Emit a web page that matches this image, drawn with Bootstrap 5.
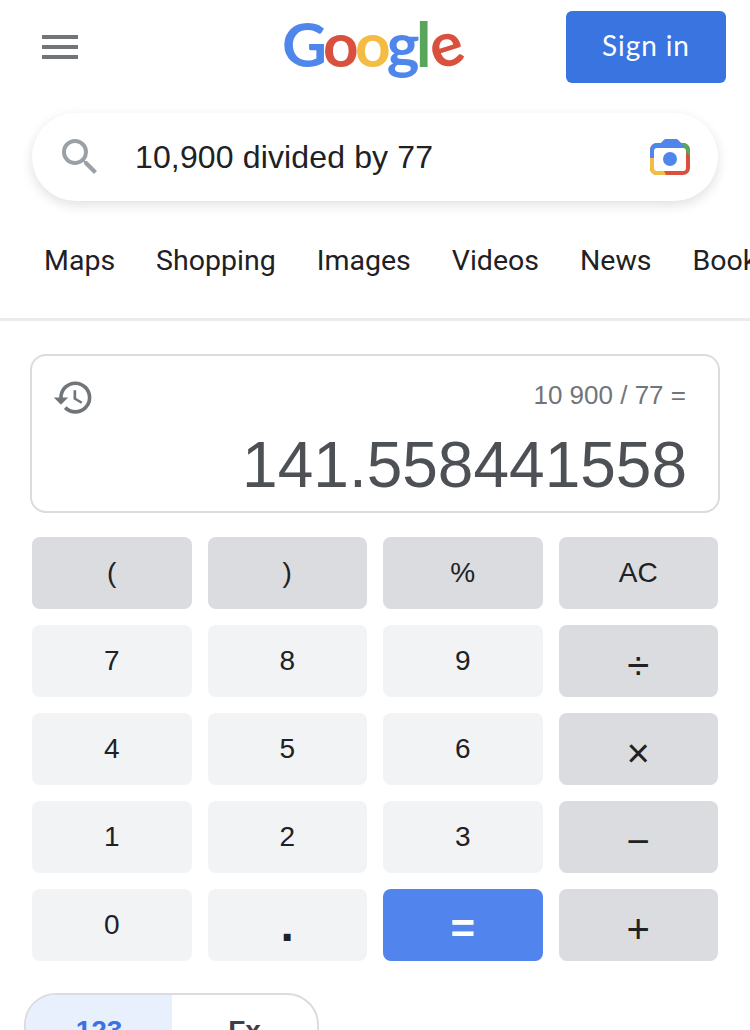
<!DOCTYPE html>
<html lang="en">
<head>
  <meta charset="UTF-8" />
  <meta name="viewport" content="width=device-width, initial-scale=1.0"/>
  <title>10,900 divided by 77 - Google Search</title>
  <link rel="stylesheet" href="https://cdn.jsdelivr.net/npm/bootstrap@5.3.0/dist/css/bootstrap.min.css"/>
  <style>
    html, body { height: 1030px; overflow: hidden; }
    body { background: #fff; font-family: "Liberation Sans", Arial, sans-serif; color: #202124; }
    .top-bar { height: 94px; padding: 11px 24px 0 42px; }
    .burger { width: 36px; height: 24px; margin-top: 24px; }
    .burger span { display: block; height: 4px; margin-bottom: 6px; background: #70757a; }
    .g-logo { margin-left: 204px; margin-top: -12px; font-family: Lato, sans-serif; font-weight: 700; font-size: 62px; line-height: 88px; letter-spacing: -3.6px; height: 88px; }
    .g-blue { color: #4f86ec; } .g-red { color: #d9503f; } .g-yellow { color: #f2bd42; } .g-green { color: #58a55c; }
    .g-tilt { display: inline-block; transform: rotate(-18deg); }
    .signin { width: 160px; height: 72px; background: #3974e0; border: 0; border-radius: 6px; color: #fff; font-family: Lato, sans-serif; font-size: 28px; letter-spacing: .9px; padding: 0 0 4px; }
    .search-pill { height: 88px; margin: 19px 32px 0; padding: 0 28px 0 24px; border-radius: 44px; background: #fff; box-shadow: 0 4px 12px rgba(32,33,36,.14); }
    .search-pill .query { margin-left: 31px; font-size: 32px; letter-spacing: .14px; color: #202124; flex: 1; }
    .tab-strip { height: 120px; padding: 42px 0 0 44px; gap: 41px; border-bottom: 3px solid #ebebeb; overflow: hidden; white-space: nowrap; font-family: Roboto, sans-serif; font-size: 28.5px; line-height: 36px; }
    .calc-wrap { padding: 33px 32px 0; }
    .calc-box { height: 159px; margin: 0 -2px 24px; padding: 20px 31px 0 20px; border: 2px solid #dadce0; border-radius: 16px; }
    .calc-sum { font-size: 26px; line-height: 32px; color: #70757a; text-align: right; margin: 3px 1px 0 0; }
    .calc-value { font-size: 64px; line-height: 76px; color: #4d5156; text-align: right; margin-top: 8px; }
    .key-grid { display: grid; grid-template-columns: repeat(4, 1fr); gap: 16px; }
    .key { height: 72px; border: 0; border-radius: 8px; padding: 0; font-size: 28px; line-height: 72px; color: #202124; background: #f1f3f4; font-family: inherit; overflow: hidden; }
    .key.dark { background: #dadce0; }
    .key.eq { background: #5284ed; color: #fff; font-size: 42px; font-weight: 700; padding-top: 4px; }
    .key.oper { font-size: 40px; padding-top: 4px; }
    .key.dot { font-size: 48px; font-weight: 700; padding-bottom: 6px; }
    .mode-tabs { width: 295px; height: 90px; margin: 32px 0 0 -8px; border: 2px solid #dadce0; border-radius: 32px; overflow: hidden; font-size: 28px; font-weight: 700; line-height: 32px; }
    .mode-tabs div { padding-top: 20px; text-align: center; }
    .mode-on { width: 146px; background: #e8f0fe; color: #3974e0; }
    .mode-off { flex: 1; color: #3c4043; }
  </style>
</head>
<body>
  <div class="top-bar d-flex">
    <div class="burger"><span></span><span></span><span></span></div>
    <div class="g-logo"><span class="g-blue">G</span><span class="g-red">o</span><span class="g-yellow">o</span><span class="g-blue">g</span><span class="g-green">l</span><span class="g-red g-tilt">e</span></div>
    <button class="btn signin ms-auto">Sign in</button>
  </div>

  <div class="search-pill d-flex align-items-center">
    <svg width="48" height="48" viewBox="0 0 24 24" fill="#9aa0a6"><path d="M15.5 14h-.79l-.28-.27A6.47 6.47 0 0 0 16 9.5 6.5 6.5 0 1 0 9.5 16c1.61 0 3.09-.59 4.23-1.57l.27.28v.79l5 4.99L20.49 19l-4.99-5zm-6 0C7.01 14 5 11.99 5 9.5S7.01 5 9.5 5 14 7.01 14 9.5 11.99 14 9.5 14z"/></svg>
    <div class="query">10,900 divided by 77</div>
    <svg width="40" height="36" viewBox="0 0 40 36">
      <clipPath id="camBody"><path d="M0 11a7 7 0 0 1 7-7h4l3-3q1-1 3-1h8q2 0 3 1l3 3h2a7 7 0 0 1 7 7v18a7 7 0 0 1-7 7H7a7 7 0 0 1-7-7z"/></clipPath>
      <g clip-path="url(#camBody)">
        <rect width="40" height="36" fill="#d9503f"/>
        <path d="M0 19h8l8 17H0z" fill="#f2bd42"/>
        <path d="M30 0h10v17L32 9z" fill="#58a55c"/>
        <path d="M0 0h30l4 9v2H8v8H0z" fill="#4f86ec"/>
      </g>
      <rect x="4" y="9" width="32" height="23" rx="3" fill="#fff"/>
      <circle cx="20" cy="20" r="7" fill="#4f86ec"/>
    </svg>
  </div>

  <div class="tab-strip d-flex">
    <span>Maps</span><span>Shopping</span><span>Images</span><span>Videos</span><span>News</span><span>Books</span>
  </div>

  <div class="calc-wrap">
    <div class="calc-box">
      <div class="d-flex justify-content-between">
        <svg width="43" height="43" viewBox="0 0 24 24" fill="#70757a"><path d="M13 3a9 9 0 0 0-9 9H1l3.89 3.89.07.14L9 12H6c0-3.87 3.13-7 7-7s7 3.13 7 7-3.13 7-7 7c-1.93 0-3.68-.79-4.94-2.06l-1.42 1.42A8.954 8.954 0 0 0 13 21a9 9 0 0 0 0-18zm-1 5v5l4.28 2.54.72-1.21-3.5-2.08V8H12z"/></svg>
        <div class="calc-sum">10 900 / 77 =</div>
      </div>
      <div class="calc-value">141.558441558</div>
    </div>

    <div class="key-grid">
      <button class="key dark">(</button><button class="key dark">)</button><button class="key dark">%</button><button class="key dark">AC</button>
      <button class="key">7</button><button class="key">8</button><button class="key">9</button><button class="key dark oper">÷</button>
      <button class="key">4</button><button class="key">5</button><button class="key">6</button><button class="key dark oper">×</button>
      <button class="key">1</button><button class="key">2</button><button class="key">3</button><button class="key dark oper">−</button>
      <button class="key">0</button><button class="key dot">.</button><button class="key eq">=</button><button class="key dark oper">+</button>
    </div>

    <div class="mode-tabs d-flex">
      <div class="mode-on">123</div>
      <div class="mode-off">Fx</div>
    </div>
  </div>
  <script src="https://cdn.jsdelivr.net/npm/bootstrap@5.3.0/dist/js/bootstrap.bundle.min.js"></script>
</body>
</html>
